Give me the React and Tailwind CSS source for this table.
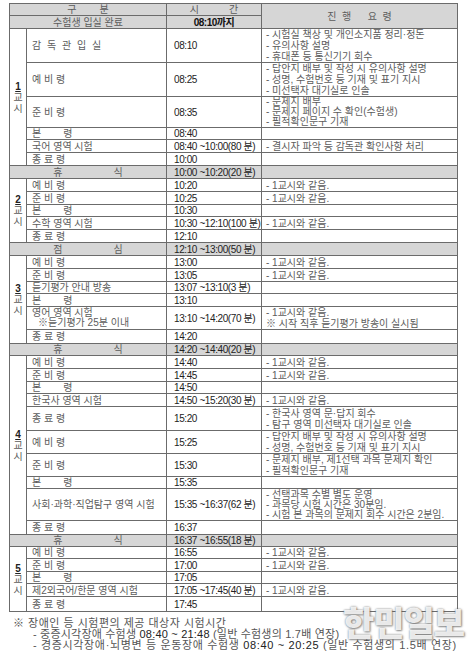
import React from "react";

const FONT = "font-['Liberation_Sans','Noto_Sans_CJK_KR',sans-serif]";

const bd = "border border-[#6b6b6b]";
const SAME = ["- 1교시와 같음."];

function Bon() {
  return (
    <span>
      본<span className="inline-block w-[22px]" />령
    </span>
  );
}

const groups = [
  {
    g: "1",
    rows: [
      { l: "감독관입실", wide: true, t: "08:10", h: 34, n: ["- 시험실 책상 및 개인소지품 정리·정돈", "- 유의사항 설명", "- 휴대폰 등 통신기기 회수"] },
      { l: "예 비 령", t: "08:25", h: 34, n: ["- 답안지 배부 및 작성 시 유의사항 설명", "- 성명, 수험번호 등 기재 및 표기 지시", "- 미선택자 대기실로 인솔"] },
      { l: "준 비 령", t: "08:35", h: 31, n: ["- 문제지 배부", "- 문제지 페이지 수 확인(수험생)", "- 필적확인문구 기재"] },
      { l: "bon", t: "08:40", h: 12 },
      { l: "국어 영역 시험", t: "08:40 ~10:00(80 분)", h: 13, n: ["- 결시자 파악 등 감독관 확인사항 처리"] },
      { l: "종 료 령", t: "10:00", h: 13 },
    ],
    brk: { a: "휴", b: "식", t: "10:00 ~10:20(20 분)", h: 13 },
  },
  {
    g: "2",
    rows: [
      { l: "예 비 령", t: "10:20", h: 13, n: SAME },
      { l: "준 비 령", t: "10:25", h: 13, n: SAME },
      { l: "bon", t: "10:30", h: 12 },
      { l: "수학 영역 시험", t: "10:30 ~12:10(100 분)", h: 13, n: SAME },
      { l: "종 료 령", t: "12:10", h: 13 },
    ],
    brk: { a: "점", b: "심", t: "12:10 ~13:00(50 분)", h: 13 },
  },
  {
    g: "3",
    rows: [
      { l: "예 비 령", t: "13:00", h: 13, n: SAME },
      { l: "준 비 령", t: "13:05", h: 13, n: SAME },
      { l: "듣기평가 안내 방송", t: "13:07 ~13:10(3 분)", h: 12 },
      { l: "bon", t: "13:10", h: 13 },
      { l: "eng", t: "13:10 ~14:20(70 분)", h: 22, n: ["- 1교시와 같음.", "※ 시작 직후 듣기평가 방송이 실시됨"] },
      { l: "종 료 령", t: "14:20", h: 14 },
    ],
    brk: { a: "휴", b: "식", t: "14:20 ~14:40(20 분)", h: 12 },
  },
  {
    g: "4",
    rows: [
      { l: "예 비 령", t: "14:40", h: 13, n: SAME },
      { l: "준 비 령", t: "14:45", h: 13, n: SAME },
      { l: "bon", t: "14:50", h: 12 },
      { l: "한국사 영역 시험", t: "14:50 ~15:20(30 분)", h: 13, n: SAME },
      { l: "종 료 령", t: "15:20", h: 24, n: ["- 한국사 영역 문·답지 회수", "- 탐구 영역 미선택자 대기실로 인솔"] },
      { l: "예 비 령", t: "15:25", h: 23, n: ["- 답안지 배부 및 작성 시 유의사항 설명", "- 성명, 수험번호 등 기재 및 표기 지시"] },
      { l: "준 비 령", t: "15:30", h: 23, n: ["- 문제지 배부, 제1선택 과목 문제지 확인", "- 필적확인문구 기재"] },
      { l: "bon", t: "15:35", h: 12 },
      { l: "사회·과학·직업탐구 영역 시험", t: "15:35 ~16:37(62 분)", h: 32, n: ["- 선택과목 수별 별도 운영", "- 과목당 시험 시간은 30분임.", "- 시험 본 과목의 문제지 회수 시간은 2분임."] },
      { l: "종 료 령", t: "16:37", h: 14 },
    ],
    brk: { a: "휴", b: "식", t: "16:37 ~16:55(18 분)", h: 11 },
  },
  {
    g: "5",
    rows: [
      { l: "예 비 령", t: "16:55", h: 12, n: SAME },
      { l: "준 비 령", t: "17:00", h: 13, n: SAME },
      { l: "bon", t: "17:05", h: 12 },
      { l: "제2외국어/한문 영역 시험", t: "17:05 ~17:45(40 분)", h: 13, n: SAME },
      { l: "종 료 령", t: "17:45", h: 15 },
    ],
  },
];

function Label({ r }) {
  if (r.l === "bon") return <Bon />;
  if (r.l === "eng")
    return (
      <div className="leading-[10px]">
        <div>영어 영역 시험</div>
        <div className="pl-[6px]">※듣기평가 25분 이내</div>
      </div>
    );
  if (r.wide) return <span className="tracking-[1.5px]">감 독 관 입 실</span>;
  return <span>{r.l}</span>;
}

export default function App() {
  return (
    <div className={`relative w-[475px] h-[662px] bg-white text-[#5c5c5c] overflow-hidden ${FONT}`}>
      <div className="pt-[3px] pl-[9px]">
        <table className="w-[448px] table-fixed border-collapse text-[10px] leading-[11px]">
          <colgroup>
            <col className="w-[17px]" />
            <col className="w-[140px]" />
            <col className="w-[95px]" />
            <col className="w-[196px]" />
          </colgroup>
          <tbody>
            <tr className="h-[11px] bg-[#d6d6d6]">
              <td colSpan={2} className={`${bd} p-0`}>
                <div className="flex justify-center gap-[23px]">
                  <span>구</span>
                  <span>분</span>
                </div>
              </td>
              <td className={`${bd} p-0`}>
                <div className="flex justify-center gap-[30px]">
                  <span>시</span>
                  <span>간</span>
                </div>
              </td>
              <td rowSpan={2} className={`${bd} p-0 text-center whitespace-pre`}>
                {"진  행      요  령"}
              </td>
            </tr>
            <tr className="h-[13px] bg-[#d6d6d6]">
              <td colSpan={2} className={`${bd} p-0 text-center`}>
                수험생 입실 완료
              </td>
              <td className={`${bd} p-0 text-center text-[#111] font-bold tracking-[-0.5px]`}>08:10까지</td>
            </tr>
            {groups.map((grp) => (
              <React.Fragment key={grp.g}>
                {grp.rows.map((r, i) => (
                  <tr key={i} style={{ height: r.h }}>
                    {i === 0 && (
                      <td rowSpan={grp.rows.length} className={`${bd} p-0 align-middle`}>
                        <div className="flex flex-col items-center leading-[11px]">
                          <span className="font-bold text-[#222] underline">{grp.g}</span>
                          <span>교</span>
                          <span>시</span>
                        </div>
                      </td>
                    )}
                    <td className={`${bd} py-0 pl-[5px] pr-0 align-middle whitespace-nowrap`}>
                      <Label r={r} />
                    </td>
                    <td className={`${bd} py-0 pl-[7px] pr-0 align-middle whitespace-nowrap text-[#222] tracking-[-0.4px]`}>
                      {r.t}
                    </td>
                    <td className={`${bd} py-0 pl-[4px] pr-0 align-middle whitespace-nowrap`}>
                      {r.n && (
                        <div className={r.h <= 32 && r.n.length === 3 ? "leading-[10px]" : "leading-[11px]"}>
                          {r.n.map((x, k) => (
                            <div key={k}>{x}</div>
                          ))}
                        </div>
                      )}
                    </td>
                  </tr>
                ))}
                {grp.brk && (
                  <tr className="bg-[#d6d6d6]" style={{ height: grp.brk.h }}>
                    <td colSpan={2} className={`${bd} p-0`}>
                      <div className="flex justify-center gap-[51px]">
                        <span>{grp.brk.a}</span>
                        <span>{grp.brk.b}</span>
                      </div>
                    </td>
                    <td className={`${bd} py-0 pl-[7px] pr-0 whitespace-nowrap text-[#222] tracking-[-0.4px]`}>
                      {grp.brk.t}
                    </td>
                    <td className={`${bd} p-0`} />
                  </tr>
                )}
              </React.Fragment>
            ))}
          </tbody>
        </table>
      </div>

      <div className="mt-[6px] text-[11px] leading-[11px] text-[#555]">
        <div className="pl-[13px] tracking-[0.5px]">※ 장애인 등 시험편의 제공 대상자 시험시간</div>
        <div className="pl-[33px] whitespace-nowrap tracking-[0.2px]">
          - 중증시각장애 수험생 <span className="text-[#222]">08:40 ~ 21:48</span> (일반 수험생의 1.7배 연장)
        </div>
        <div className="pl-[33px] whitespace-nowrap tracking-[0.65px]">
          - 경증시각장애·뇌병변 등 운동장애 수험생 <span className="text-[#222]">08:40 ~ 20:25</span> (일반 수험생의
          1.5배 연장)
        </div>
      </div>

      <div className="absolute left-[343px] top-[602px] font-['Noto_Sans_CJK_KR',sans-serif] font-black text-[34px] leading-[40px] tracking-[-1px] text-white/85 [text-shadow:0_0_2px_rgba(90,90,90,0.8),1px_1px_2px_rgba(90,90,90,0.6)]">
        한민일보
      </div>
    </div>
  );
}
